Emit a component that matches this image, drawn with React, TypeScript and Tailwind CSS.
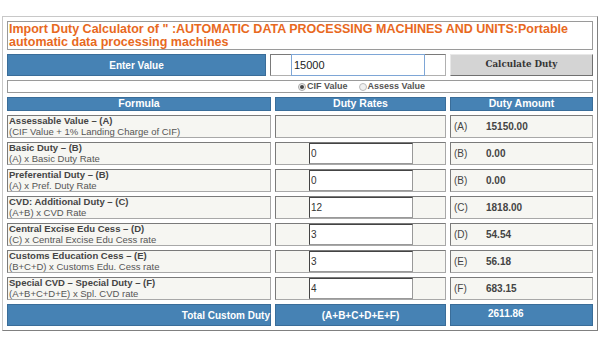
import React from "react";

const rows = [
  { t: "Assessable Value – (A)", s: "(CIF Value + 1% Landing Charge of CIF)", rate: null, l: "(A)", v: "15150.00" },
  { t: "Basic Duty – (B)", s: "(A) x Basic Duty Rate", rate: "0", l: "(B)", v: "0.00" },
  { t: "Preferential Duty – (B)", s: "(A) x Pref. Duty Rate", rate: "0", l: "(B)", v: "0.00" },
  { t: "CVD: Additional Duty – (C)", s: "(A+B) x CVD Rate", rate: "12", l: "(C)", v: "1818.00" },
  { t: "Central Excise Edu Cess – (D)", s: "(C) x Central Excise Edu Cess rate", rate: "3", l: "(D)", v: "54.54" },
  { t: "Customs Education Cess – (E)", s: "(B+C+D) x Customs Edu. Cess rate", rate: "3", l: "(E)", v: "56.18" },
  { t: "Special CVD – Special Duty – (F)", s: "(A+B+C+D+E) x Spl. CVD rate", rate: "4", l: "(F)", v: "683.15" },
];

const cell = "border border-t-[#7a7a7a] border-l-[#7a7a7a] border-b-[#a8a8a8] border-r-[#a8a8a8] bg-[#f6f6f2]";
const blue = "bg-[#4682b4] border border-[#3a6d99]";

export default function App() {
  return (
    <div className="w-[602px] h-[355px] bg-white pt-[16px] pl-[2px]" style={{ fontFamily: '"Liberation Sans", Arial, sans-serif' }}>
      <div className="w-[596px] border border-t-[#c8c8c8] border-l-[#c8c8c8] border-b-[#808080] border-r-[#808080] p-[4px] flex flex-col gap-[4px]">
        <div className="h-[29px] border border-[#9a9a9a] bg-white px-[1px] text-[12.5px] leading-[13px] font-bold text-[#e8691e] pt-[1px]">
          Import Duty Calculator of " :AUTOMATIC DATA PROCESSING MACHINES AND UNITS:Portable automatic data processing machines
        </div>
        <div className="grid grid-cols-[259px_176px_143px] gap-[4px] h-[22px]">
          <div className={`${blue} flex items-center justify-center text-white font-bold text-[10px]`}>Enter Value</div>
          <div className="border border-t-[#7a7a7a] border-l-[#7a7a7a] border-b-[#b0b0b0] border-r-[#b0b0b0] bg-white relative">
            <div className="absolute left-[20px] top-[-1px] w-[134px] h-[22px] border border-[#7ea6d6] bg-white flex items-center pl-[2px] text-[11px] text-[#222]">15000</div>
          </div>
          <div className="border border-t-[#e8e8e8] border-l-[#e8e8e8] border-b-[#707070] border-r-[#707070] bg-[#d4d4d4] flex items-center justify-center text-[8.7px] font-bold text-[#333]" style={{ fontFamily: '"DejaVu Serif", "Liberation Serif", serif' }}>
            Calculate Duty
          </div>
        </div>
        <div className="h-[13px] border border-[#9a9a9a] bg-white flex items-center pl-[290px] text-[9px] font-bold text-[#555] leading-none">
          <span className="w-[8px] h-[8px] rounded-full border border-[#aaa] bg-[#eee] flex items-center justify-center mr-[1px]">
            <span className="w-[4px] h-[4px] rounded-full bg-[#444]"></span>
          </span>
          <span>CIF Value</span>
          <span className="w-[8px] h-[8px] rounded-full border border-[#bbb] bg-[#f0f0f0] ml-[11px] mr-[1px]"></span>
          <span>Assess Value</span>
        </div>
        <div className="grid grid-cols-[264px_171px_143px] gap-x-[4px] gap-y-[4px]">
          <div className={`${blue} h-[14px] flex items-center justify-center text-white font-bold text-[10.5px]`}>Formula</div>
          <div className={`${blue} h-[14px] flex items-center justify-center text-white font-bold text-[10.5px]`}>Duty Rates</div>
          <div className={`${blue} h-[14px] flex items-center justify-center text-white font-bold text-[10.5px]`}>Duty Amount</div>
          {rows.map((r, i) => (
            <React.Fragment key={i}>
              <div className={`${cell} h-[23px] flex flex-col justify-center pl-[1px] text-[9.5px] leading-[10.5px] text-[#555]`}>
                <div className="font-bold text-[#444]">{r.t}</div>
                <div>{r.s}</div>
              </div>
              <div className={`${cell} h-[23px] relative`}>
                {r.rate !== null && (
                  <div className="absolute left-[33px] top-[0px] w-[104px] h-[21px] bg-white border border-t-[#444] border-l-[#444] border-b-[#999] border-r-[#999] flex items-center pl-[1px] text-[10px] text-[#333]">
                    {r.rate}
                  </div>
                )}
              </div>
              <div className={`${cell} h-[23px] flex items-center text-[10px] text-[#444]`}>
                <span className="w-[35px] pl-[3px]">{r.l}</span>
                <span className="font-bold">{r.v}</span>
              </div>
            </React.Fragment>
          ))}
          <div className={`${blue} h-[22px] flex items-center justify-end text-white font-bold text-[10px]`}>Total Custom Duty</div>
          <div className={`${blue} h-[22px] flex items-center justify-center text-white font-bold text-[10px]`}>(A+B+C+D+E+F)</div>
          <div className={`${blue} h-[22px] flex pl-[37px] pt-[1px] text-white font-bold text-[10px]`}>2611.86</div>
        </div>
      </div>
    </div>
  );
}
